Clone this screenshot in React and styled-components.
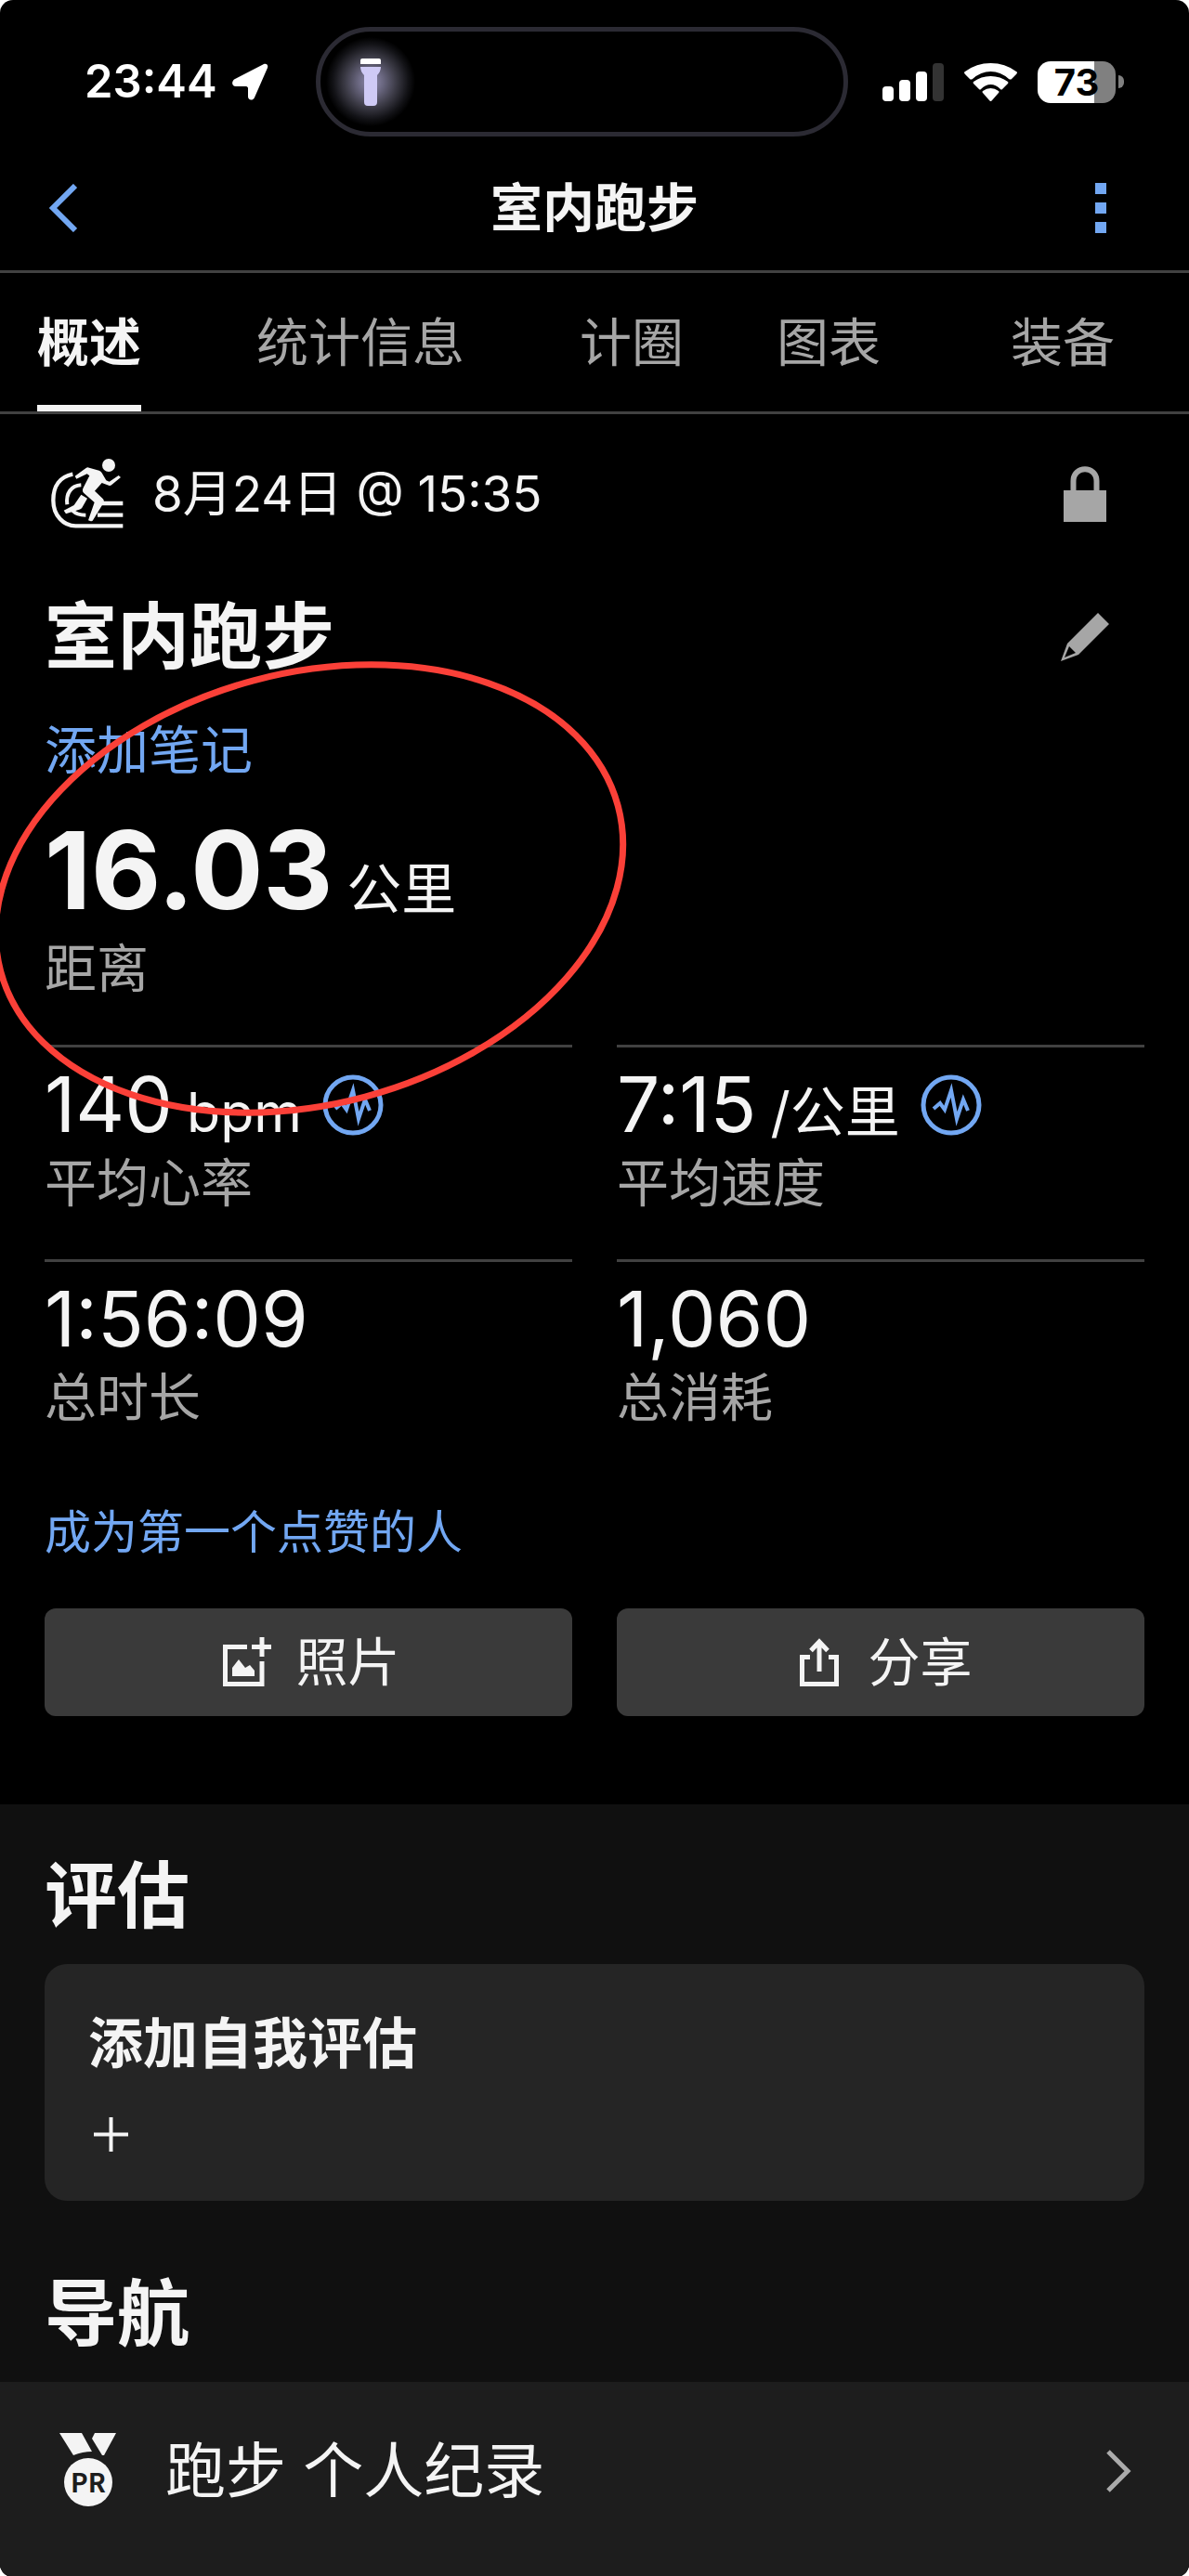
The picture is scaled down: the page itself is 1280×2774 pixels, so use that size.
import React, { useState } from 'react';
import styled, { createGlobalStyle, ThemeProvider } from 'styled-components';

const theme = {
  colors: {
    background: '#000000',
    section: '#101010',
    card: '#252525',
    row: '#1d1d1d',
    button: '#3a3a3a',
    divider: '#414141',
    text: '#f4f4f4',
    muted: '#a6a6a6',
    link: '#72a7f2',
    marker: '#fb4038',
  },
  fontSize: {
    sm: '50px',
    base: '56px',
    lg: '59px',
    xl: '65px',
    title: '78px',
    value: '82px',
    hero: '116px',
  },
  gutter: '48px',
};

const GlobalStyle = createGlobalStyle`
  * {
    box-sizing: border-box;
  }

  body {
    margin: 0;
    background: #ffffff;
  }

  button {
    padding: 0;
    border: 0;
    background: none;
    color: inherit;
    font: inherit;
    cursor: pointer;
  }

  h1, h2, h3, p, dl, dt, dd {
    margin: 0;
  }

  svg {
    display: block;
    flex: none;
  }
`;

const Screen = styled.div`
  overflow: hidden;
  border-radius: 14px;
  background: ${({ theme }) => theme.colors.background};
  color: ${({ theme }) => theme.colors.text};
  font-family: Inter, 'Noto Sans CJK SC', sans-serif;
  font-size: ${({ theme }) => theme.fontSize.base};
  line-height: 72px;
`;

/* status bar */

const StatusBar = styled.div`
  display: grid;
  grid-template-columns: 340fr 573fr 367fr;
  align-items: center;
  height: 156px;
  padding-top: 20px;
  color: #ffffff;
`;

const Clock = styled.div`
  display: flex;
  align-items: center;
  gap: 16px;
  padding-left: 91px;
  font-size: 49px;
  font-weight: 600;
`;

const Island = styled.div`
  display: flex;
  align-items: center;
  height: 118px;
  padding-left: 6px;
  border: 5px solid #2b2a33;
  border-radius: 59px;
`;

const TorchGlow = styled.div`
  display: grid;
  place-items: center;
  width: 96px;
  height: 96px;
  border-radius: 50%;
  background: radial-gradient(closest-side, #918db0 0%, #6a6780 28%, #3b3a45 58%, #131317 84%, #000000 100%);
`;

const StatusIcons = styled.div`
  display: flex;
  align-items: center;
  gap: 22px;
  padding-left: 37px;
`;

const Battery = styled.div`
  display: flex;
  align-items: center;
  gap: 3px;

  &::after {
    content: '';
    width: 6px;
    height: 14px;
    border-radius: 0 6px 6px 0;
    background: #808080;
  }
`;

const BatteryLevel = styled.span`
  width: 84px;
  height: 45px;
  border-radius: 14px;
  background: linear-gradient(to right, #ffffff 73%, #808080 73%);
  color: #000000;
  font-size: 40px;
  font-weight: 700;
  line-height: 45px;
  text-align: center;
`;

/* header and tabs */

const NavBar = styled.header`
  display: grid;
  grid-template-columns: 1fr auto 1fr;
  align-items: center;
  height: 138px;
  padding: 0 89px 0 53px;
  border-bottom: 3px solid ${({ theme }) => theme.colors.divider};
`;

const NavTitle = styled.h1`
  padding-left: 36px;
  font-size: ${({ theme }) => theme.fontSize.base};
  font-weight: 600;
`;

const NavButton = styled.button`
  justify-self: ${({ $align }) => $align};
  color: ${({ theme }) => theme.colors.link};
`;

const Tabs = styled.nav`
  display: grid;
  grid-template-columns: 192fr 392fr 192fr 232fr 272fr;
  justify-items: center;
  border-bottom: 3px solid ${({ theme }) => theme.colors.divider};
`;

const Tab = styled.button`
  padding: 39px 0 31px;
  border-bottom: 7px solid ${({ $active }) => ($active ? '#f4f4f4' : 'transparent')};
  color: ${({ $active, theme }) => ($active ? theme.colors.text : theme.colors.muted)};
  font-weight: ${({ $active }) => ($active ? 600 : 400)};
  white-space: nowrap;
`;

/* summary */

const Summary = styled.section`
  position: relative;
  padding: 40px ${({ theme }) => theme.gutter} 95px;
`;

const Row = styled.div`
  display: flex;
  align-items: center;
  justify-content: space-between;
  padding-right: 38px;
`;

const ActivityDate = styled.p`
  display: flex;
  align-items: center;
  gap: 24px;
  font-size: 53px;
`;

const ActivityTitle = styled.h2`
  font-size: ${({ theme }) => theme.fontSize.title};
  font-weight: 600;
  line-height: 96px;
`;

const TitleRow = styled(Row)`
  margin-top: 60px;
`;

const IconButton = styled.button`
  display: grid;
  place-items: center;
  width: 52px;
  color: ${({ theme }) => theme.colors.muted};
`;

const TextLink = styled.a`
  display: block;
  width: fit-content;
  margin-top: ${({ $gap }) => $gap};
  color: ${({ theme }) => theme.colors.link};
  font-size: ${({ $size, theme }) => theme.fontSize[$size]};
  text-decoration: none;
`;

const Stat = styled.div`
  display: flex;
  flex-direction: column-reverse;
  justify-content: flex-end;
  gap: 8px;
  padding: 22px 0 46px;
  border-top: 3px solid ${({ theme }) => theme.colors.divider};
`;

const HeroStat = styled.div`
  display: flex;
  flex-direction: column-reverse;
  gap: 12px;
  padding: 35px 0 46px;
`;

const StatLabel = styled.dt`
  color: ${({ theme }) => theme.colors.muted};
`;

const StatValue = styled.dd`
  display: flex;
  align-items: baseline;
  gap: 15px;
  font-size: ${({ $hero, theme }) => ($hero ? theme.fontSize.hero : theme.fontSize.value)};
  font-weight: ${({ $hero }) => ($hero ? 700 : 400)};
  line-height: ${({ $hero }) => ($hero ? '116px' : '80px')};

  button {
    align-self: center;
    margin-left: 7px;
    color: ${({ theme }) => theme.colors.link};
  }
`;

const Unit = styled.span`
  font-size: ${({ theme }) => theme.fontSize.lg};
  font-weight: 400;
  line-height: 60px;
`;

const StatGrid = styled.dl`
  display: grid;
  grid-template-columns: 1fr 1fr;
  column-gap: 48px;
`;

const Actions = styled.div`
  display: grid;
  grid-template-columns: 1fr 1fr;
  gap: 48px;
  margin-top: 46px;
`;

const ActionButton = styled.button`
  display: flex;
  align-items: center;
  justify-content: center;
  gap: 27px;
  height: 116px;
  padding-left: 6px;
  border-radius: 12px;
  background: ${({ theme }) => theme.colors.button};
`;

const Marker = styled.svg`
  position: absolute;
  top: 254px;
  left: 0;
  pointer-events: none;
`;

/* lower sections */

const Section = styled.section`
  padding-top: 51px;
  background: ${({ theme }) => theme.colors.section};
`;

const SectionTitle = styled.h2`
  padding: 0 ${({ theme }) => theme.gutter};
  margin-bottom: 25px;
  font-size: ${({ theme }) => theme.fontSize.title};
  font-weight: 600;
  line-height: 96px;
`;

const Card = styled.div`
  margin: 0 ${({ theme }) => theme.gutter} 74px;
  padding: 50px 47px 53px;
  border-radius: 24px;
  background: ${({ theme }) => theme.colors.card};
`;

const CardTitle = styled.h3`
  margin-bottom: 43px;
  font-size: ${({ theme }) => theme.fontSize.lg};
  font-weight: 600;
`;

const AddButton = styled.button`
  display: block;
  margin-left: 6px;
`;

const RecordLink = styled.a`
  display: flex;
  align-items: center;
  padding: 50px 62px 68px 56px;
  background: ${({ theme }) => theme.colors.row};
  color: inherit;
  font-size: ${({ theme }) => theme.fontSize.xl};
  line-height: 92px;
  text-decoration: none;
`;

const RecordLabel = styled.span`
  flex: 1;
  padding-left: 30px;
`;

const MedalText = styled.text`
  fill: ${({ theme }) => theme.colors.row};
  font-family: 'Noto Sans CJK SC', sans-serif;
  font-size: 28px;
  font-weight: 700;
  text-anchor: middle;
`;

const LocationArrow = () => (
  <svg width="39" height="40" viewBox="0 0 39 40" fill="currentColor">
    <path d="M34 1 3 17C-1 19-1 25 4 25H15C16 25 17 26 17 27V36C17 40 22 41 24 37L38 5C39 2 37 0 34 1Z" />
  </svg>
);

const Torch = () => (
  <svg width="24" height="51" viewBox="0 0 24 51">
    <path d="M3 0H21Q23 0 23 2V6H1V2Q1 0 3 0Z" fill="#ffffff" />
    <path d="M1 9H23Q23 14 19 18V47Q19 51 15 51H9Q5 51 5 47V18Q1 14 1 9Z" fill="#cfcaf5" />
  </svg>
);

const Signal = () => (
  <svg width="66" height="41" viewBox="0 0 66 41" fill="currentColor">
    <rect x="0" y="25" width="12" height="16" rx="4" />
    <rect x="18" y="18" width="12" height="23" rx="4" />
    <rect x="36" y="9" width="12" height="32" rx="4" />
    <rect x="54" y="0" width="12" height="41" rx="4" fill="#333333" />
  </svg>
);

const Wifi = () => (
  <svg width="57" height="41" viewBox="0 0 57 41" fill="currentColor">
    <path d="M1 12Q-1 10 1 9Q13 0 28.500 0T56 9Q58 10 56 12L51 17Q50 18 48 17Q39 9 28.500 9T9 17Q7 18 6 17Z" />
    <path d="M10 22Q9 21 10 20Q18 14 28.500 14T47 20Q48 21 47 22L41 28Q40 29 39 28Q34 23 28.500 23T18 28Q17 29 16 28Z" />
    <path d="M20 32Q19 31 20 30Q24 27 28.500 27T37 30Q38 31 37 32L30 40Q28.500 42 27 40Z" />
  </svg>
);

const ChevronLeft = () => (
  <svg width="30" height="52" viewBox="0 0 30 52" fill="none" stroke="currentColor" strokeWidth="6">
    <path d="M28 2 4 26 28 50" />
  </svg>
);

const ChevronRight = () => (
  <svg width="28" height="46" viewBox="0 0 28 46" fill="none" stroke="#ababab" strokeWidth="5">
    <path d="M3 2 24 23 3 44" />
  </svg>
);

const Dots = () => (
  <svg width="12" height="54" viewBox="0 0 12 54" fill="currentColor">
    <path d="M0 0h12v12H0zM0 21h12v12H0zM0 42h12v12H0z" />
  </svg>
);

const Treadmill = () => (
  <svg width="92" height="92" viewBox="0 0 276 276" fill="none" stroke="#f4f4f4">
    <path d="M91 74C50 82 28 112 28 158C28 208 62 241 100 241H253" strokeWidth="13" />
    <path d="M118 109C86 111 68 135 73 172" strokeWidth="12" />
    <path d="M91 192C101 203 114 206 133 206" strokeWidth="12" />
    <path d="M184 168H253M171 206H253" strokeWidth="13" />
    <circle cx="207" cy="45" r="21" fill="#f4f4f4" stroke="none" />
    <path
      d="M98 80 135 53Q139 51 144 53L176 62Q182 64 185 70L199 94 209 98 239 78 246 84 216 109Q212 112 207 110L185 102 162 128 188 153Q194 159 190 167L157 221Q154 228 147 225L141 223 161 165 126 134Q120 128 125 118L145 79 137 73 103 89Z"
      fill="#f4f4f4"
      stroke="none"
    />
    <path d="M118 140 138 152 121 182Q118 187 112 188L69 202 62 191 95 174Z" fill="#f4f4f4" stroke="none" />
  </svg>
);

const Lock = () => (
  <svg width="46" height="60" viewBox="0 0 46 60" fill="none">
    <path d="M10.500 28V16C10.500 -1 35.500 -1 35.500 16V28" stroke="currentColor" strokeWidth="6" />
    <path d="M0 26H46V60H0Z" fill="currentColor" />
  </svg>
);

const Pencil = () => (
  <svg width="52" height="52" viewBox="0 0 52 52" fill="currentColor">
    <path d="M40 0 52 12 19 45 0 52 7 33ZM9 36 4 48 16 43Z" fillRule="evenodd" />
  </svg>
);

const Pulse = () => (
  <svg width="66" height="66" viewBox="0 0 66 66" fill="none" stroke="currentColor">
    <circle cx="33" cy="33" r="30" strokeWidth="5" />
    <path d="M14 37 21 31 26 38 33 17 39 48 46 27 51 39" strokeWidth="4" />
  </svg>
);

const AddPhoto = () => (
  <svg width="52" height="54" viewBox="0 0 52 54" fill="none" stroke="currentColor" strokeWidth="5">
    <path d="M26 10.500H2.500V50.500H42V26" />
    <path d="M42 0V21M31 10.500H52" />
    <path d="M10 33 17 24 24 33 29 30 34 36V42H10Z" fill="currentColor" stroke="none" />
  </svg>
);

const Share = () => (
  <svg width="52" height="52" viewBox="-5 0 52 52" fill="none" stroke="currentColor" strokeWidth="5">
    <path d="M11 20.500H2.500V49.500H39.500V20.500H31" />
    <path d="M21 36V5M12 13.500 21 4 30 13.500" />
  </svg>
);

const Plus = () => (
  <svg width="37" height="37" viewBox="0 0 37 37" fill="none" stroke="currentColor" strokeWidth="4">
    <path d="M18.500 0V37M0 18.500H37" />
  </svg>
);

const Medal = () => (
  <svg width="92" height="92" viewBox="0 4 92 92" fill="#f4f4f4">
    <path d="M8 9H32L43 29Q33 29 23 33Z" />
    <path d="M46 9H69L56 33 54 33 43 15Z" />
    <circle cx="39" cy="62" r="26" />
    <MedalText x="39" y="73">
      PR
    </MedalText>
  </svg>
);

const tabs = ['概述', '统计信息', '计圈', '图表', '装备'];

const stats = [
  { label: '平均心率', value: '140', unit: 'bpm', chart: true },
  { label: '平均速度', value: '7:15', unit: '/公里', chart: true },
  { label: '总时长', value: '1:56:09' },
  { label: '总消耗', value: '1,060' },
];

const App = () => {
  const [active, setActive] = useState(tabs[0]);

  return (
    <ThemeProvider theme={theme}>
      <GlobalStyle />
      <Screen>
        <StatusBar>
          <Clock>
            23:44
            <LocationArrow />
          </Clock>
          <Island>
            <TorchGlow>
              <Torch />
            </TorchGlow>
          </Island>
          <StatusIcons>
            <Signal />
            <Wifi />
            <Battery>
              <BatteryLevel>73</BatteryLevel>
            </Battery>
          </StatusIcons>
        </StatusBar>

        <NavBar>
          <NavButton $align="start" aria-label="返回">
            <ChevronLeft />
          </NavButton>
          <NavTitle>室内跑步</NavTitle>
          <NavButton $align="end" aria-label="更多">
            <Dots />
          </NavButton>
        </NavBar>

        <Tabs>
          {tabs.map((tab) => (
            <Tab key={tab} $active={tab === active} onClick={() => setActive(tab)}>
              {tab}
            </Tab>
          ))}
        </Tabs>

        <Summary>
          <Row>
            <ActivityDate>
              <Treadmill />
              8月24日 @ 15:35
            </ActivityDate>
            <IconButton aria-label="隐私">
              <Lock />
            </IconButton>
          </Row>
          <TitleRow>
            <ActivityTitle>室内跑步</ActivityTitle>
            <IconButton aria-label="编辑">
              <Pencil />
            </IconButton>
          </TitleRow>
          <TextLink href="#note" $gap="38px" $size="base">
            添加笔记
          </TextLink>

          <dl>
            <HeroStat>
              <StatLabel>距离</StatLabel>
              <StatValue $hero>
                16.03
                <Unit>公里</Unit>
              </StatValue>
            </HeroStat>
          </dl>
          <StatGrid>
            {stats.map(({ label, value, unit, chart }) => (
              <Stat key={label}>
                <StatLabel>{label}</StatLabel>
                <StatValue>
                  {value}
                  {unit && <Unit>{unit}</Unit>}
                  {chart && (
                    <button aria-label={`${label}图表`}>
                      <Pulse />
                    </button>
                  )}
                </StatValue>
              </Stat>
            ))}
          </StatGrid>

          <TextLink href="#likes" $gap="27px" $size="sm">
            成为第一个点赞的人
          </TextLink>
          <Actions>
            <ActionButton>
              <AddPhoto />
              照片
            </ActionButton>
            <ActionButton>
              <Share />
              分享
            </ActionButton>
          </Actions>

          <Marker width="700" height="520" viewBox="0 0 700 520" aria-hidden="true">
            <ellipse
              cx="333"
              cy="257"
              rx="344"
              ry="232"
              transform="rotate(-15 333 257)"
              fill="none"
              stroke={theme.colors.marker}
              strokeWidth="7"
            />
          </Marker>
        </Summary>

        <Section>
          <SectionTitle>评估</SectionTitle>
          <Card>
            <CardTitle>添加自我评估</CardTitle>
            <AddButton aria-label="添加自我评估">
              <Plus />
            </AddButton>
          </Card>
          <SectionTitle>导航</SectionTitle>
          <RecordLink href="#records">
            <Medal />
            <RecordLabel>跑步 个人纪录</RecordLabel>
            <ChevronRight />
          </RecordLink>
        </Section>
      </Screen>
    </ThemeProvider>
  );
};

export default App;
